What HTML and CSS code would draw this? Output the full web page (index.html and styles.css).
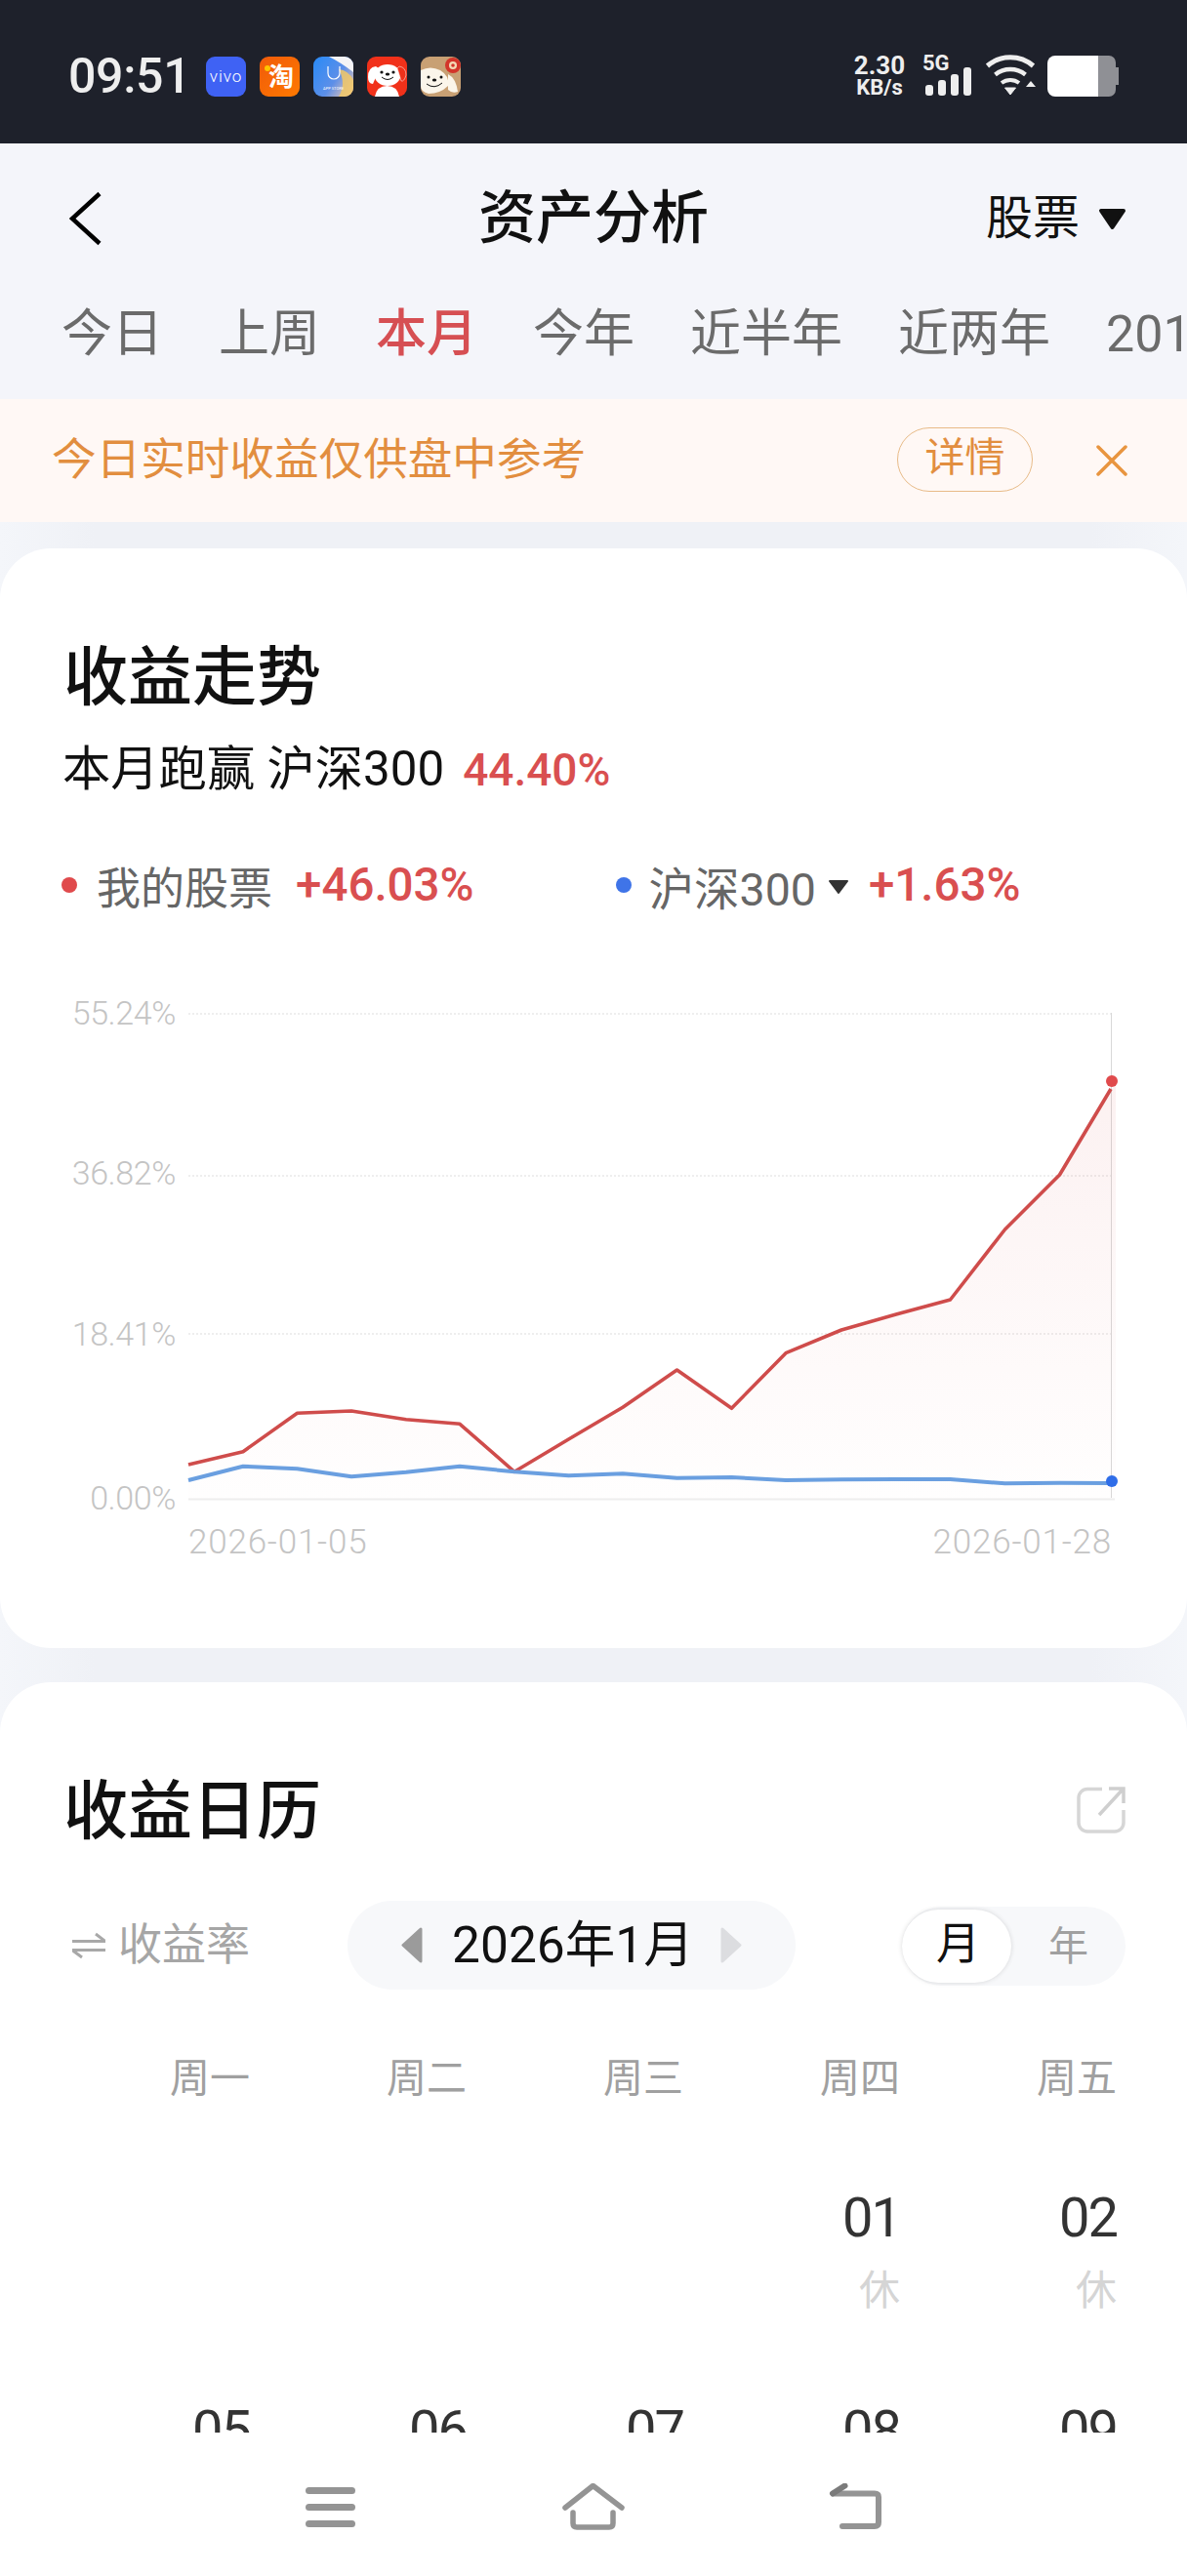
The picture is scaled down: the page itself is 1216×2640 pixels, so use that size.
FILE: index.html
```html
<!DOCTYPE html>
<html lang="zh-CN">
<head>
<meta charset="utf-8">
<title>资产分析</title>
<link rel="stylesheet" href="styles.css">
</head>
<body>
<div class="page">
  <header class="status">
    <span class="time">09:51</span>
    <div class="apps">
      <svg class="app" viewBox="0 0 41 41"><rect width="41" height="41" rx="9" fill="#3f62f4"/><text class="vivo" x="20.5" y="26" text-anchor="middle">vivo</text></svg>
      <svg class="app" viewBox="0 0 41 41"><defs><linearGradient id="tb" x1="0" y1="0" x2="1" y2="1"><stop offset="0" stop-color="#f05a0a"/><stop offset="1" stop-color="#ff7a00"/></linearGradient></defs><rect width="41" height="41" rx="9" fill="url(#tb)"/><text class="tao" x="22" y="30" text-anchor="middle">淘</text><circle cx="8" cy="12" r="3" fill="#ffc400"/></svg>
      <svg class="app" viewBox="0 0 41 41"><defs><linearGradient id="as" x1="0" y1="0.2" x2="1" y2="0.9"><stop offset="0" stop-color="#2f8bf5"/><stop offset="0.55" stop-color="#5d8fe8"/><stop offset="1" stop-color="#f3c9b0"/></linearGradient></defs><rect width="41" height="41" rx="9" fill="url(#as)"/><path d="M16 0H32a9 9 0 0 1 9 9V16Q28 6 16 0Z" fill="#f4f4f6"/><path d="M26 13Q36 14 41 24V32a9 9 0 0 1-9 9H26Q34 28 26 13Z" fill="#f2c866" opacity=".85"/><path d="M15 10V17a6 6 0 0 0 12 0V10" fill="none" stroke="#fff" stroke-width="1.200"/><text class="store" x="20.500" y="34" text-anchor="middle">APP STORE</text></svg>
      <svg class="app" viewBox="0 0 41 41"><rect width="41" height="41" rx="9" fill="#f1311a"/><path d="M8 41Q10 30 20.500 30T33 41Z" fill="#fff"/><ellipse cx="21" cy="19" rx="13.500" ry="11" fill="#fff"/><path d="M9 10Q1 11 1 21Q1 28 6 28Q10 20 12 12Z" fill="#fff"/><path d="M33 10Q40 11 40 19Q38 26 35 25Q33 18 31 12Z" fill="#f1311a" stroke="#fff" stroke-width=".5"/><circle cx="15" cy="16" r="1.600" fill="#111"/><circle cx="27" cy="16" r="1.600" fill="#111"/><ellipse cx="21" cy="18" rx="2.200" ry="1.500" fill="#111"/><path d="M15 21Q21 26 27 21" fill="none" stroke="#111" stroke-width="1"/></svg>
      <svg class="app" viewBox="0 0 41 41"><rect width="41" height="41" rx="9" fill="#c8a074"/><circle cx="33" cy="9" r="8" fill="#d3352a"/><circle cx="33" cy="9" r="4" fill="#f3d9b5"/><circle cx="33" cy="9" r="1.800" fill="#d3352a"/><path d="M0 14Q10 9 20 14Q30 20 28 30Q20 38 8 38Q0 36 0 30Z" fill="#fbf5ea"/><path d="M28 18Q36 22 38 36Q32 38 28 34Z" fill="#fbf5ea"/><circle cx="8" cy="21" r="1.500" fill="#111"/><circle cx="21" cy="21" r="1.500" fill="#111"/><ellipse cx="14" cy="24" rx="2.200" ry="1.500" fill="#111"/><path d="M6 28Q14 34 22 27" fill="none" stroke="#111" stroke-width="1"/></svg>
    </div>
    <div class="speed"><span class="speed-num">2.30</span><span class="speed-unit">KB/s</span></div>
    <div class="signal">
      <span class="net">5G</span>
      <svg class="bars" viewBox="0 0 48 29"><rect x="0" y="18" width="8" height="11" rx="3" fill="#eee"/><rect x="13" y="13" width="8" height="16" rx="3" fill="#eee"/><rect x="26" y="7" width="8" height="22" rx="3" fill="#eee"/><rect x="39" y="0" width="8" height="29" rx="3" fill="#eee"/></svg>
    </div>
    <svg class="wifi" viewBox="0 0 52 42"><g fill="none" stroke="#eee"><path d="M2.500 11.500A36 36 0 0 1 49.500 11.500" stroke-width="5"/><path d="M10.500 20.500A25 25 0 0 1 41.500 20.500" stroke-width="4.500"/><path d="M17 29A15 15 0 0 1 35 29" stroke-width="4"/></g><path d="M20.500 34H31.500L26 41Z" fill="#eee" stroke="#eee" stroke-linejoin="round"/><path d="M47 27L52 33H42Z" fill="#eee"/></svg>
    <svg class="battery" viewBox="0 0 73 42"><path d="M52 0H63a7 7 0 0 1 7 7V12H73V30H70V35a7 7 0 0 1-7 7H52Z" fill="#8f9095"/><path d="M8 0H52V42H8a8 8 0 0 1-8-8V8a8 8 0 0 1 8-8Z" fill="#fff"/></svg>
  </header>

  <section class="topbar">
    <div class="nav">
      <svg class="back" viewBox="0 0 33 56"><path d="M31 2.500L3 28L31 53.500" fill="none" stroke="#000" stroke-width="4.500"/></svg>
      <h1 class="title">资产分析</h1>
      <div class="kind"><span>股票</span><svg class="kind-arrow" viewBox="0 0 29 23"><path d="M3 3H26L14.500 20Z" fill="#111" stroke="#111" stroke-width="4" stroke-linejoin="round"/></svg></div>
    </div>
    <div class="tabs">
      <span class="tab">今日</span><span class="tab">上周</span><span class="tab tab-on">本月</span><span class="tab">今年</span><span class="tab">近半年</span><span class="tab">近两年</span><span class="tab">201</span>
    </div>
  </section>

  <section class="banner">
    <span class="banner-text">今日实时收益仅供盘中参考</span>
    <span class="banner-btn">详情</span>
    <svg class="banner-x" viewBox="0 0 32 32"><path d="M2 2L30 30M30 2L2 30" fill="none" stroke="#e8953f" stroke-width="3.500" stroke-linecap="round"/></svg>
  </section>

  <section class="card card-trend">
    <h2 class="card-title">收益走势</h2>
    <p class="beat">本月跑赢 沪深300<span class="beat-val">44.40%</span></p>
    <div class="legend">
      <i class="dot dot-red"></i><span class="leg-label">我的股票</span><span class="leg-val">+46.03%</span>
      <i class="dot dot-blue"></i><span class="leg-label leg-index">沪深300</span>
      <svg class="leg-arrow" viewBox="0 0 22 16"><path d="M2 2H20L11 14Z" fill="#333" stroke="#333" stroke-width="2" stroke-linejoin="round"/></svg>
      <span class="leg-val">+1.63%</span>
    </div>
    <svg class="chart" viewBox="0 0 1216 582">
      <defs><linearGradient id="area" x1="0" y1="0" x2="0" y2="1"><stop offset="0" stop-color="#d94f50" stop-opacity=".08"/><stop offset="1" stop-color="#d94f50" stop-opacity=".005"/></linearGradient></defs>
      <line class="grid" x1="193" y1="21" x2="1138" y2="21"/>
      <line class="grid" x1="193" y1="187" x2="1138" y2="187"/>
      <line class="grid" x1="193" y1="349" x2="1138" y2="349"/>
      <line class="axis" x1="193" y1="518.500" x2="1142" y2="518.500"/>
      <line class="vline" x1="1138.500" y1="20" x2="1138.500" y2="517"/>
      <path fill="url(#area)" d="M193 483L249 469.700L304.500 430.300L360 428L416 436.700L471 441.300L527 490.300L582.500 457L638 424.300L693.500 386L749.500 425.300L805 368.700L862 345L918 329L973.500 314L1029.500 242L1085.500 186L1143 92V518H193Z"/>
      <polyline class="red" points="193,483 249,469.700 304.500,430.300 360,428 416,436.700 471,441.300 527,490.300 582.500,457 638,424.300 693.500,386 749.500,425.300 805,368.700 862,345 918,329 973.500,314 1029.500,242 1085.500,186 1138,98"/>
      <polyline class="blue" points="193,499 249,484.700 304.500,487.300 360,495.300 416,490.700 471,484.700 527,490.300 582.500,494.300 638,492.300 693.500,496.700 749.500,496 805,499 862,498.300 918,498 973.500,498 1029.500,502.300 1085.500,501.700 1138,502"/>
      <circle cx="1139" cy="90" r="6" fill="#e04a4c"/>
      <circle cx="1139" cy="500" r="6" fill="#2f6de8"/>
      <text class="y-label" x="180" y="32" text-anchor="end">55.24%</text>
      <text class="y-label" x="180" y="196" text-anchor="end">36.82%</text>
      <text class="y-label" x="180" y="361" text-anchor="end">18.41%</text>
      <text class="y-label" x="180" y="529" text-anchor="end">0.00%</text>
      <text class="x-label" x="193" y="574">2026-01-05</text>
      <text class="x-label" x="1139" y="574" text-anchor="end">2026-01-28</text>
    </svg>
  </section>

  <section class="card card-cal">
    <div class="cal-head">
      <h2 class="card-title">收益日历</h2>
      <svg class="share" viewBox="0 0 50 48"><path d="M26 2.500H11a9 9 0 0 0-9 9V37a9 9 0 0 0 9 9H39a9 9 0 0 0 9-9V24" fill="none" stroke="#d6d6d6" stroke-width="3.500"/><path d="M23 29L47 3M33 2H48V17" fill="none" stroke="#cfcfcf" stroke-width="3.500"/></svg>
    </div>
    <div class="controls">
      <svg class="swap" viewBox="0 0 34 28"><path d="M0 9.500H34L24 2" fill="none" stroke="#a8a8a8" stroke-width="3"/><path d="M34 18.500H0L10 26" fill="none" stroke="#a8a8a8" stroke-width="3"/></svg>
      <span class="rate">收益率</span>
      <div class="month">
        <svg class="tri" viewBox="0 0 23 37"><path d="M21 2V35L3 18.500Z" fill="#9b9b9b" stroke="#9b9b9b" stroke-width="3" stroke-linejoin="round"/></svg>
        <span class="month-text">2026年1月</span>
        <svg class="tri" viewBox="0 0 23 37"><path d="M2 2V35L20 18.500Z" fill="#dcdde0" stroke="#dcdde0" stroke-width="3" stroke-linejoin="round"/></svg>
      </div>
      <div class="toggle"><span class="toggle-on">月</span><span class="toggle-off">年</span></div>
    </div>
    <div class="weekdays"><span>周一</span><span>周二</span><span>周三</span><span>周四</span><span>周五</span></div>
    <div class="days">
      <div class="day"></div><div class="day"></div><div class="day"></div>
      <div class="day"><b class="num">01</b><em class="rest">休</em></div>
      <div class="day"><b class="num">02</b><em class="rest">休</em></div>
      <div class="day"><b class="num">05</b></div>
      <div class="day"><b class="num">06</b></div>
      <div class="day"><b class="num">07</b></div>
      <div class="day"><b class="num">08</b></div>
      <div class="day"><b class="num">09</b></div>
    </div>
  </section>

  <footer class="sysnav">
    <svg class="sys-menu" viewBox="0 0 52 41"><rect width="51" height="7" rx="3.500" fill="#949494"/><rect y="17" width="51" height="7" rx="3.500" fill="#949494"/><rect y="34" width="51" height="7" rx="3.500" fill="#949494"/></svg>
    <svg class="sys-home" viewBox="0 0 64 48"><path d="M3 25L31.500 2.500L61 25M11 30V41Q11 45 15 45H48Q52 45 52 41V30" fill="none" stroke="#949494" stroke-width="5.500" stroke-linecap="round" stroke-linejoin="round"/></svg>
    <svg class="sys-back" viewBox="0 0 55 48"><path d="M5 10.500H47Q51 10.500 51 14V40Q51 44 47 44H14" fill="none" stroke="#949494" stroke-width="6" stroke-linecap="round"/><path d="M4 10.500L16.500 2.500" fill="none" stroke="#7b7b7b" stroke-width="6" stroke-linecap="round"/></svg>
  </footer>
</div>
</body>
</html>
```
FILE: styles.css
```css
* { box-sizing: border-box; }
html, body { margin: 0; padding: 0; }
body {
  font-family: Roboto, "Noto Sans CJK SC", sans-serif;
  color: #111;
}
h1, h2, p { margin: 0; font-weight: 400; }
i, em, b { font-style: normal; font-weight: 400; }
svg { display: block; flex: none; }

.page {
  position: relative;
  width: 1216px;
  height: 2640px;
  overflow: hidden;
  background: linear-gradient(90deg, #f4f6fa, #eff1f6 8%, #eff1f6 92%, #f4f6fa);
}

/* status bar */
.status {
  height: 147px;
  background: #1e212b;
  display: flex;
  align-items: flex-start;
  padding: 56px 0 0 70px;
  color: #eee;
}
.time {
  font-size: 50px;
  line-height: 60px;
  margin-top: -8px;
  font-weight: 500;
  letter-spacing: -.3px;
  width: 141px;
}
.apps { display: flex; gap: 14px; margin-top: 2px; width: 663px; }
.app { width: 41px; height: 41px; }
.vivo { font: 300 17px Roboto, sans-serif; fill: #fff; letter-spacing: 1px; }
.tao { font: 700 26px "Noto Sans CJK SC", sans-serif; fill: #fff; }
.store { font: 400 4px Roboto, sans-serif; fill: #fff; }
.speed { display: flex; flex-direction: column; align-items: center; width: 54px; font-weight: 700; margin-top: -1px; }
.speed-num { font-size: 26px; line-height: 25px; }
.speed-unit { font-size: 22px; line-height: 19px; }
.signal { position: relative; width: 50px; height: 44px; margin-left: 20px; }
.net { position: absolute; left: -3px; top: -2px; font-size: 22px; line-height: 22px; font-weight: 700; }
.bars { position: absolute; left: 0; top: 13px; width: 48px; height: 29px; }
.wifi { width: 52px; height: 42px; margin-left: 11px; }
.battery { width: 73px; height: 42px; margin-left: 12px; margin-top: 1px; }

/* top bar */
.topbar { height: 262px; background: #f4f5fa; }
.nav {
  height: 154px;
  display: grid;
  grid-template-columns: 1fr auto 1fr;
  align-items: center;
  padding: 0 62px;
}
.back { width: 33px; height: 56px; margin-left: 9px; }
.title { font-size: 59px; line-height: 70px; font-weight: 500; }
.kind { display: flex; align-items: center; justify-content: flex-end; gap: 19px; font-size: 48px; line-height: 60px; }
.kind-arrow { width: 29px; height: 23px; }
.tabs {
  display: flex;
  gap: 57px;
  padding-left: 63px;
  font-size: 52px;
  line-height: 84px;
  color: #6b6b6b;
  white-space: nowrap;
  overflow: hidden;
}
.tab { flex: none; }
.tab-on { color: #d64f53; font-weight: 500; }

/* banner */
.banner {
  height: 126px;
  background: #fff8f5;
  display: flex;
  align-items: center;
  padding: 0 61px 0 53px;
  color: #e28e3f;
}
.banner-text { flex: 1; font-size: 45.6px; line-height: 60px; }
.banner-btn {
  width: 139px;
  height: 66px;
  margin-top: -2px;
  border: 1.5px solid #e8bb88;
  border-radius: 33px;
  font-size: 41px;
  line-height: 60px;
  text-align: center;
}
.banner-x { width: 32px; height: 32px; margin-left: 65px; }

/* cards */
.card { background: #fff; border-radius: 52px; }
.card-trend { margin-top: 27px; height: 1127px; padding-top: 86px; }
.card-cal { margin-top: 35px; height: 980px; padding-top: 86px; }
.card-title {
  font-size: 66px;
  line-height: 86px;
  padding-top: 4px;
  font-weight: 500;
  padding-left: 65px;
}
.beat {
  margin-top: 20px;
  padding-left: 64px;
  font-size: 49.3px;
  line-height: 60px;
}
.beat-val { margin-left: 19px; font-size: 46px; color: #d94f50; font-weight: 500; }

.legend {
  display: flex;
  align-items: center;
  margin-top: 58px;
  padding-left: 63px;
  height: 60px;
  font-size: 45px;
  color: #666;
}
.dot { width: 16px; height: 16px; border-radius: 50%; margin-right: 20px; }
.dot-red { background: #e04a4c; }
.dot-blue { background: #3f74e8; margin-left: 145px; margin-right: 18px; }
.leg-label { flex: none; }
.leg-index { font-size: 46.5px; }
.leg-val { margin-left: 24px; color: #d94f50; font-size: 47.5px; font-weight: 500; }
.leg-arrow { width: 22px; height: 16px; margin-left: 12px; margin-right: -4px; margin-top: 3px; }

.chart { width: 1216px; height: 582px; margin-top: 81px; }
.grid { stroke: #eeeeee; stroke-width: 2; stroke-dasharray: 2 2; }
.axis { stroke: #eeeeee; stroke-width: 2; }
.vline { stroke: #d8d8d8; stroke-width: 1; }
.red { fill: none; stroke: #cf4c4b; stroke-width: 3.6; stroke-linejoin: round; }
.blue { fill: none; stroke: #6a9fe0; stroke-width: 4; stroke-linejoin: round; }
.y-label, .x-label { font: 300 34px Roboto, sans-serif; fill: #c4c4c4; }
.y-label { letter-spacing: -.4px; }
.x-label { font-size: 35px; letter-spacing: .8px; }

/* calendar */
.cal-head { display: flex; justify-content: space-between; align-items: center; padding-right: 63px; }
.share { width: 50px; height: 48px; }
.controls {
  display: flex;
  align-items: center;
  margin-top: 48px;
  padding-left: 74px;
}
.swap { width: 34px; height: 28px; }
.rate { flex: none; width: 135px; margin-left: 13px; font-size: 45px; line-height: 60px; color: #a6a6a6; white-space: nowrap; }
.month {
  flex: none;
  width: 459px;
  height: 91px;
  margin-left: 100px;
  border-radius: 46px;
  background: #f7f8fa;
  display: flex;
  align-items: center;
  padding-left: 54px;
}
.tri { width: 23px; height: 37px; }
.month-text { width: 305px; padding-left: 30px; font-size: 51.5px; line-height: 60px; font-weight: 400; white-space: nowrap; }
.toggle {
  flex: none;
  width: 229px;
  height: 81px;
  margin-top: 2px;
  margin-left: 109px;
  border-radius: 41px;
  background: #f7f8fa;
  display: flex;
  align-items: center;
}
.toggle-on {
  width: 112px;
  height: 75px;
  padding-left: 3px;
  border-radius: 38px;
  background: #fff;
  box-shadow: 0 0 5px rgba(0, 0, 0, .14);
  text-align: center;
  font-size: 45px;
  line-height: 72px;
}
.toggle-off { flex: 1; text-align: center; font-size: 41px; color: #a0a0a0; line-height: 72px; }

.weekdays, .days {
  display: grid;
  grid-template-columns: repeat(5, 222px);
  padding-left: 34px;
  text-align: right;
}
.weekdays { margin-top: 60px; font-size: 41px; line-height: 62px; color: #a0a0a0; }
.days { margin-top: 82px; grid-auto-rows: 218px; }
.day { display: flex; flex-direction: column; align-items: flex-end; }
.num { font-size: 56px; line-height: 60px; letter-spacing: -2px; color: #333; }
.rest { margin-top: 20px; font-size: 42px; line-height: 50px; color: #d5d5d5; }

/* system navigation */
.sysnav {
  position: absolute;
  left: 0;
  right: 0;
  top: 2493px;
  bottom: 0;
  background: #fff;
  display: flex;
  align-items: flex-start;
  padding: 52px 0 0 313px;
}
.sys-menu { width: 52px; height: 41px; margin-top: 4px; }
.sys-home { width: 64px; height: 48px; margin-left: 211px; }
.sys-back { width: 55px; height: 48px; margin-left: 209px; }
```
